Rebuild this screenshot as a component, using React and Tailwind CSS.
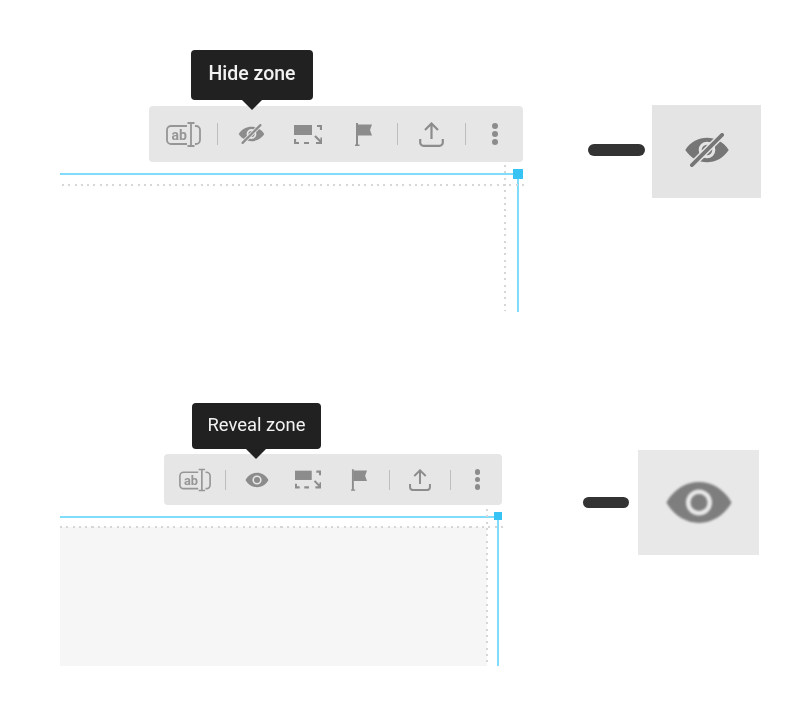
const GREY = '#8c8c8c'

const sizes = {
  lg: {
    bar: 'ml-[89px] w-[374px] h-[56px] pl-[6.5px]',
    cell: 'w-[56px]',
    sep: 'w-[12px]',
    sepLine: 'h-[22px]',
    dots: 'w-[47px] gap-[2.4px]',
    dot: 'size-[6px]',
    ab: 'w-[35px] h-[25px]',
    eye: 'w-[27px] h-[20px]',
    full: 'w-[28px] h-[19px]',
    flag: 'w-[17px] h-[23px]',
    upload: 'w-[25px] h-[25px]',
  },
  sm: {
    bar: 'ml-[104px] w-[338px] h-[51px] pl-[5.5px]',
    cell: 'w-[51px]',
    sep: 'w-[10.5px]',
    sepLine: 'h-[20px]',
    dots: 'w-[43px] gap-[2px]',
    dot: 'size-[5.5px]',
    ab: 'w-[32px] h-[24px]',
    eye: 'w-[24px] h-[18px]',
    full: 'w-[26px] h-[19px]',
    flag: 'w-[16px] h-[22px]',
    upload: 'w-[24px] h-[22px]',
  },
}

const EyeOpen = ({ className, color = GREY }) => (
  <svg viewBox="0 0 24 18" className={className}>
    <path
      fill={color}
      fillRule="evenodd"
      d="M.5 9C6 -.6 18 -.6 23.5 9 18 18.6 6 18.6.5 9zM12 4.4a4.6 4.6 0 1 0 0 9.2 4.6 4.6 0 0 0 0-9.2z"
    />
    <circle cx="12" cy="9" r="3" fill={color} />
  </svg>
)

const EyeOff = ({ className, bg, color = GREY }) => (
  <svg viewBox="0 0 24 18" className={className}>
    <path
      fill={color}
      fillRule="evenodd"
      d="M.5 9C6 .4 18 .4 23.5 9 18 17.6 6 17.6.5 9zM12 4.6a4.4 4.4 0 1 0 0 8.8 4.4 4.4 0 0 0 0-8.8z"
    />
    <circle cx="12" cy="9" r="2.8" fill={color} />
    <path d="M4 17 20 1" stroke={bg} strokeWidth="3.6" fill="none" />
    <path d="M4 17 20 1" stroke={color} strokeWidth="2" strokeLinecap="round" fill="none" />
  </svg>
)

const TextField = ({ className }) => (
  <svg viewBox="0 0 35 25" className={className} fill="none" stroke="#969696" strokeWidth="1.8">
    <path d="M21 4H5a4 4 0 0 0-4 4v10a4 4 0 0 0 4 4h16" />
    <path d="M29 4h1a4 4 0 0 1 4 4v10a4 4 0 0 1-4 4h-1" />
    <path d="M21.5 1h7M25 1v23M21.5 24h7" />
    <text x="5.5" y="18" fontSize="14" fontWeight="700" fontFamily="Roboto, sans-serif" fill="#969696" stroke="none">
      ab
    </text>
  </svg>
)

const FullArea = ({ className }) => (
  <svg viewBox="0 0 28 19" className={className} fill="none" stroke={GREY} strokeWidth="2.2">
    <rect x="0" y="0" width="18" height="10" fill={GREY} stroke="none" />
    <path d="M23 1h4v4M1 14v4h4M10 18h5M21 11l6 6M27.5 12.5V18H22" />
  </svg>
)

const Flag = ({ className }) => (
  <svg viewBox="0 0 17 23" className={className} fill={GREY}>
    <path d="M1 0h2v21.5h1.5V23h-4.5v-1.5H1z" />
    <path d="M2.5 1.5H17l-2 5.5 2 5.5H2.5z" />
  </svg>
)

const Upload = ({ className }) => (
  <svg viewBox="0 0 25 25" className={className} fill="none" stroke={GREY} strokeWidth="2.2">
    <path d="M12.5 2v15M6 8l6.5-6.5L19 8" />
    <path d="M1.2 17v3.5a3.3 3.3 0 0 0 3.3 3.3h16a3.3 3.3 0 0 0 3.3-3.3V17" />
  </svg>
)

const Sep = ({ s }) => (
  <div className={`${s.sep} flex justify-center`}>
    <div className={`${s.sepLine} w-px bg-[#bdbdbd]`} />
  </div>
)

const Cell = ({ s, children }) => <div className={`${s.cell} flex justify-center`}>{children}</div>

const Toolbar = ({ size, hidden }) => {
  const s = sizes[size]
  return (
    <div className={`${s.bar} flex items-center rounded-[4px] bg-[#e6e6e6]`}>
      <Cell s={s}><TextField className={s.ab} /></Cell>
      <Sep s={s} />
      <Cell s={s}>
        {hidden ? <EyeOff className={s.eye} bg="#e6e6e6" /> : <EyeOpen className={s.eye} />}
      </Cell>
      <Cell s={s}><FullArea className={s.full} /></Cell>
      <Cell s={s}><Flag className={s.flag} /></Cell>
      <Sep s={s} />
      <Cell s={s}><Upload className={s.upload} /></Cell>
      <Sep s={s} />
      <div className={`${s.dots} flex flex-col items-center`}>
        <span className={`${s.dot} rounded-full bg-[#8c8c8c]`} />
        <span className={`${s.dot} rounded-full bg-[#8c8c8c]`} />
        <span className={`${s.dot} rounded-full bg-[#8c8c8c]`} />
      </div>
    </div>
  )
}

const Tooltip = ({ className, arrow, children }) => (
  <div className={`${className} relative z-10 flex items-center justify-center rounded-[4px] bg-[#212121] font-['Roboto',sans-serif] text-[#f2f2f2]`}>
    {children}
    <span className={`${arrow} absolute top-full size-0 border-x-[10px] border-t-[10px] border-x-transparent border-t-[#212121]`} />
  </div>
)

const HDots = ({ className }) => (
  <div className={`${className} absolute h-[2px] bg-[repeating-linear-gradient(90deg,#d6d6d6_0_2px,transparent_2px_6.3px)]`} />
)
const VDots = ({ className }) => (
  <div className={`${className} absolute w-[2px] bg-[repeating-linear-gradient(180deg,#d6d6d6_0_2px,transparent_2px_6.3px)]`} />
)

const Handle = ({ className }) => <div className={`${className} absolute bg-[#38c3f5]`} />

export default function App() {
  return (
    <div className="h-[716px] w-[790px] overflow-hidden bg-white pt-[50px] blur-[0.6px]">
      <section className="flex items-start">
        <div className="ml-[60px] w-[463px]">
          <Tooltip className="ml-[131px] mb-[6px] h-[50px] w-[122px] pb-[2px] text-[19.5px] font-medium" arrow="left-[51px]">
            Hide zone
          </Tooltip>
          <Toolbar size="lg" hidden />
          <div className="relative mt-[11px] h-[139px] w-[459px] border-t-2 border-r-2 border-[#7fdcfa]">
            <HDots className="top-[9px] left-[2px] w-[466px]" />
            <VDots className="-top-[10px] left-[444px] h-[146px]" />
            <Handle className="-top-[6px] -right-[6px] size-[10px]" />
          </div>
        </div>
        <div className="mt-[55px] ml-[65px] flex items-center gap-[7px]">
          <div className="mb-[3px] h-[12px] w-[57px] rounded-full bg-[#333333]" />
          <div className="flex h-[93px] w-[109px] items-center justify-center bg-[#e4e4e4] pb-[3px]">
            <EyeOff className="h-[34px] w-[46px] blur-[0.6px]" bg="#e4e4e4" color="#767676" />
          </div>
        </div>
      </section>

      <section className="mt-[91px] flex items-start">
        <div className="ml-[60px] w-[442px]">
          <Tooltip className="ml-[132px] mb-[5px] h-[46px] w-[129px] pb-[3px] text-[18.4px]" arrow="left-[54px]">
            Reveal zone
          </Tooltip>
          <Toolbar size="sm" />
          <div className="relative mt-[11px] flex h-[150px] w-[439px] flex-col border-t-2 border-r-2 border-[#7fdcfa] pt-[9px]">
            <div className="mr-[10px] flex-1 bg-[#f6f6f6]" />
            <HDots className="top-[8px] left-0 w-[446px]" />
            <VDots className="-top-[9px] left-[426px] h-[158px]" />
            <Handle className="-top-[6px] -right-[5px] size-[8px]" />
          </div>
        </div>
        <div className="mt-[47px] ml-[81px] flex items-center gap-[9px]">
          <div className="h-[11px] w-[46px] rounded-full bg-[#333333]" />
          <div className="flex h-[105px] w-[121px] items-center justify-center bg-[#e8e8e8]">
            <EyeOpen className="h-[51px] w-[68px] blur-[0.8px]" color="#7e7e7e" />
          </div>
        </div>
      </section>
    </div>
  )
}
